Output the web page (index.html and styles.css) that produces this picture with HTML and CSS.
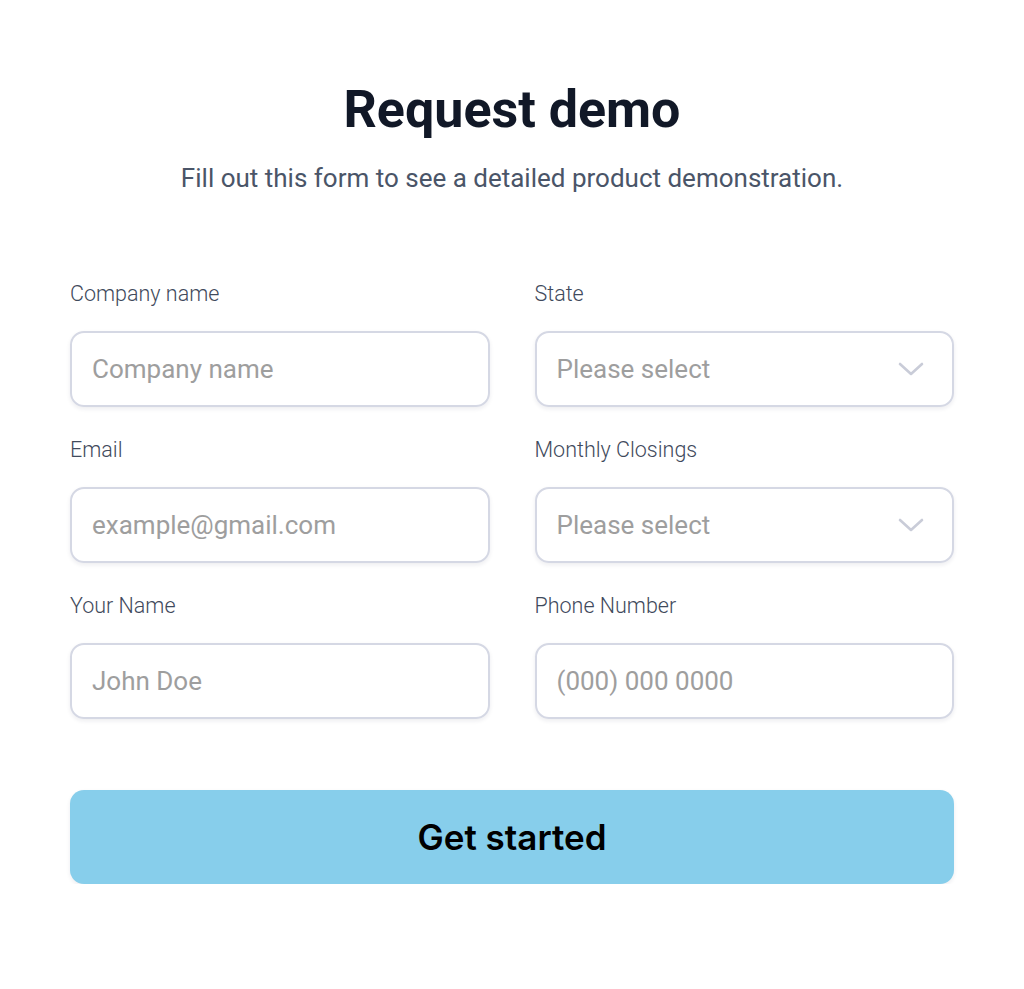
FILE: index.html
```html
<!DOCTYPE html>
<html lang="en">
<head>
<meta charset="utf-8">
<title>Request demo</title>
<link rel="stylesheet" href="styles.css">
</head>
<body>
<main class="page">
  <header class="intro">
    <h1 class="title">Request demo</h1>
    <p class="subtitle">Fill out this form to see a detailed product demonstration.</p>
  </header>
  <form class="form">
    <div class="grid">
      <label class="field">
        <span class="label">Company name</span>
        <span class="control"><span class="placeholder">Company name</span></span>
      </label>
      <label class="field">
        <span class="label">State</span>
        <span class="control select"><span class="placeholder">Please select</span>
          <svg class="chev" width="26" height="16" viewBox="0 0 26 16"><path d="M2 3l11 10 11-10" fill="none" stroke="#c9ccd8" stroke-width="2.6" stroke-linecap="round" stroke-linejoin="round"/></svg>
        </span>
      </label>
      <label class="field">
        <span class="label">Email</span>
        <span class="control"><span class="placeholder">example@gmail.com</span></span>
      </label>
      <label class="field">
        <span class="label">Monthly Closings</span>
        <span class="control select"><span class="placeholder">Please select</span>
          <svg class="chev" width="26" height="16" viewBox="0 0 26 16"><path d="M2 3l11 10 11-10" fill="none" stroke="#c9ccd8" stroke-width="2.6" stroke-linecap="round" stroke-linejoin="round"/></svg>
        </span>
      </label>
      <label class="field">
        <span class="label">Your Name</span>
        <span class="control"><span class="placeholder">John Doe</span></span>
      </label>
      <label class="field">
        <span class="label">Phone Number</span>
        <span class="control"><span class="placeholder">(000) 000 0000</span></span>
      </label>
    </div>
    <button type="button" class="submit">Get started</button>
  </form>
</main>
</body>
</html>
```
FILE: styles.css
```css
* { box-sizing: border-box; }
html, body { margin: 0; padding: 0; background: #ffffff; }
body { font-family: Roboto, "Liberation Sans", sans-serif; }
.page {
  width: 1024px;
  padding: 80px 70px 0 70px;
}
.intro { text-align: center; }
.title {
  margin: 0;
  font-size: 52px;
  line-height: 60px;
  font-weight: 700;
  color: #111827;
}
.subtitle {
  margin: 22px 0 0 0;
  font-size: 26px;
  line-height: 32px;
  font-weight: 400;
  color: #4a5568;
}
.form { margin-top: 87px; }
.grid {
  display: grid;
  grid-template-columns: 1fr 1fr;
  column-gap: 45px;
  row-gap: 30px;
}
.field { display: flex; flex-direction: column; gap: 24px; }
.label {
  font-size: 21.5px;
  line-height: 26px;
  font-weight: 300;
  color: #3f4a5c;
}
.control {
  height: 76px;
  border: 2px solid #d5d8e4;
  border-radius: 14px;
  box-shadow: 0 2px 4px rgba(20, 30, 60, 0.08);
  display: flex;
  align-items: center;
  justify-content: space-between;
  padding: 0 28px 0 20px;
}
.placeholder {
  font-size: 26px;
  color: #9e9e9e;
}
.chev { display: block; }
.submit {
  margin-top: 71px;
  width: 100%;
  height: 94px;
  border: 0;
  border-radius: 14px;
  background: #87ceeb;
  font-family: Inter, Roboto, sans-serif;
  font-size: 35px;
  font-weight: 600;
  color: #000000;
  box-shadow: 0 2px 4px rgba(20, 30, 60, 0.08);
}
```
